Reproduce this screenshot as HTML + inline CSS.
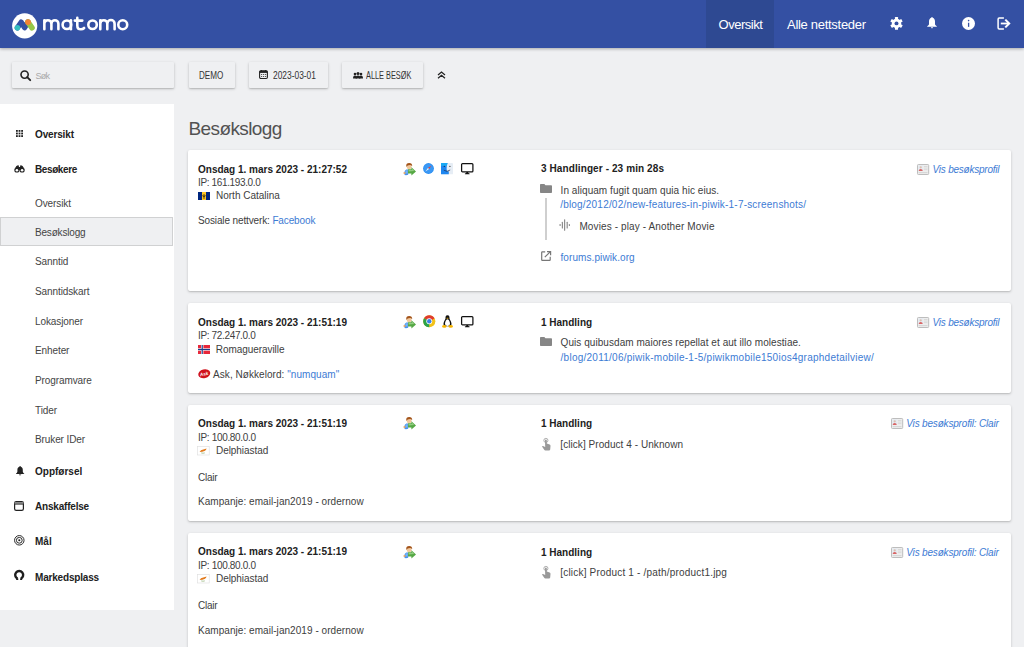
<!DOCTYPE html>
<html><head><meta charset="utf-8">
<style>
*{box-sizing:border-box}
html,body{margin:0;padding:0}
body{width:1024px;height:647px;overflow:hidden;position:relative;background:#eff0f2;font-family:"Liberation Sans",sans-serif;color:#333}
.a{position:absolute;white-space:nowrap}
svg.a{overflow:visible}
#hdr{position:absolute;left:0;top:0;width:1024px;height:48px;background:#3450a3;box-shadow:0 1px 3px rgba(0,0,0,.3);z-index:2}
#hdr .act{position:absolute;left:706.4px;top:0;width:68px;height:48px;background:#2e4992}
#hdr .t{position:absolute;color:#fff;font-size:13px;top:16.7px;line-height:16px;white-space:nowrap}
.btn{position:absolute;top:62px;height:26px;background:#eff0f2;border-radius:1px;box-shadow:0 1px 3px rgba(0,0,0,.22),0 1px 1px rgba(0,0,0,.08)}
.btn span{position:absolute;font-size:10px;color:#333;top:7.6px;line-height:12px;white-space:nowrap;transform-origin:0 0}
#side{position:absolute;left:0;top:104px;width:174px;height:505.8px;background:#fff}
.sb{position:absolute;left:35px;font-size:10px;font-weight:bold;color:#212121;line-height:12px;white-space:nowrap}
.si{position:absolute;left:35px;font-size:10px;color:#444;line-height:12px;white-space:nowrap;letter-spacing:-0.1px}
.card{position:absolute;left:188px;width:823px;background:#fff;border-radius:2px;box-shadow:0 1px 3px rgba(0,0,0,.18),0 1px 1px rgba(0,0,0,.08)}
.c{position:absolute;white-space:nowrap;font-size:10px;line-height:12px;color:#404040}
.b{font-weight:bold;color:#212121}
.lk{color:#3d7bd4}
.it{font-style:italic;color:#3d7bd4}
</style></head><body>
<div id="hdr">
  <svg class="a" style="left:12px;top:12.5px" width="26" height="26" viewBox="0 0 26 26">
    <circle cx="12.7" cy="12.8" r="12.6" fill="#fff"/>
    <path d="M5.4 14.8 L9.2 9.2 L12.6 14.7 L16 9.1" fill="none" stroke="#3450a3" stroke-width="5.4" stroke-linecap="round" stroke-linejoin="round"/>
    <path d="M16 9.1 L20 14.8" fill="none" stroke="#95c748" stroke-width="5.6" stroke-linecap="round"/>
    <circle cx="5.4" cy="14.8" r="2.8" fill="#35bfc0"/>
    <circle cx="16" cy="9.1" r="2.9" fill="#f38334"/>
  </svg>
  <svg class="a" style="left:0;top:0" width="140" height="48" viewBox="0 0 140 48">
    <g fill="none" stroke="#fff" stroke-width="2.6" stroke-linecap="round">
      <path d="M44.35 29.3 V20.2 M44.35 23.7 A3.525 3.525 0 0 1 51.4 23.7 V29.3 M51.4 23.7 A3.5 3.5 0 0 1 58.4 23.7 V29.3"/>
      <circle cx="66.9" cy="24.75" r="4.3"/>
      <path d="M70.9 20.2 V29.3"/>
      <path d="M77.3 17.9 V25.4 Q77.3 29.3 80.9 29.3 Q82.9 29.3 84.1 28 M74.8 20.6 H82.3"/>
      <circle cx="92.55" cy="24.75" r="4.25"/>
      <path d="M100.3 29.3 V20.2 M100.3 23.7 A3.5 3.5 0 0 1 107.3 23.7 V29.3 M107.3 23.7 A3.65 3.65 0 0 1 114.6 23.7 V29.3"/>
      <circle cx="122.75" cy="24.75" r="4.45"/>
    </g>
  </svg>
  <div class="act"></div>
  <div class="t" style="left:718.5px;letter-spacing:-0.48px">Oversikt</div>
  <div class="t" style="left:787px;letter-spacing:-0.29px">Alle nettsteder</div>
  <!-- gear -->
  <svg class="a" style="left:889.8px;top:17px" width="13" height="13" viewBox="0 0 13 13">
    <g fill="#fff" transform="translate(6.5 6.4)">
      <rect x="-1.55" y="-6.3" width="3.1" height="12.6" rx="0.5"/>
      <rect x="-1.55" y="-6.3" width="3.1" height="12.6" rx="0.5" transform="rotate(60)"/>
      <rect x="-1.55" y="-6.3" width="3.1" height="12.6" rx="0.5" transform="rotate(120)"/>
      <circle r="4.7"/>
    </g>
    <circle cx="6.5" cy="6.4" r="1.95" fill="#3450a3"/>
  </svg>
  <!-- bell -->
  <svg class="a" style="left:927.3px;top:17.4px" width="10" height="11.6" viewBox="0 0 10 11.6">
    <path d="M5 0 C5.5 0 5.7 0.4 5.7 0.8 C7.3 1.3 8 2.8 8 4.6 L8 6.9 C8 7.9 9 8.6 9.8 9.3 L9.8 9.8 L0.2 9.8 L0.2 9.3 C1 8.6 2 7.9 2 6.9 L2 4.6 C2 2.8 2.7 1.3 4.3 0.8 C4.3 0.4 4.5 0 5 0 Z M4 10.3 L6 10.3 C6 10.9 5.6 11.3 5 11.3 C4.4 11.3 4 10.9 4 10.3 Z" fill="#fff"/>
  </svg>
  <!-- info -->
  <svg class="a" style="left:961.6px;top:17px" width="13" height="13" viewBox="0 0 13 13">
    <circle cx="6.5" cy="6.5" r="6.5" fill="#fff"/>
    <circle cx="6.6" cy="3.6" r="0.8" fill="#3450a3"/>
    <rect x="5.95" y="5.75" width="1.3" height="4.1" fill="#3450a3"/>
  </svg>
  <!-- sign out -->
  <svg class="a" style="left:997.4px;top:16.7px" width="14" height="13" viewBox="0 0 14 13">
    <path d="M6.9 1.1 L2.2 1.1 Q1.1 1.1 1.1 2.2 L1.1 10.8 Q1.1 11.9 2.2 11.9 L6.9 11.9" fill="none" stroke="#fff" stroke-width="1.5"/>
    <path d="M3.8 6.5 L11.8 6.5" stroke="#fff" stroke-width="1.8"/>
    <path d="M8.3 2.6 L12.2 6.5 L8.3 10.4" fill="none" stroke="#fff" stroke-width="2"/>
  </svg>
</div>

<!-- top controls -->
<div class="btn" style="left:12px;width:162px">
  <svg class="a" style="left:7.5px;top:8px" width="11" height="11" viewBox="0 0 11 11">
    <circle cx="4.6" cy="4.6" r="3.6" fill="none" stroke="#222" stroke-width="1.6"/>
    <path d="M7.2 7.2 L10.2 10.2" stroke="#222" stroke-width="1.9" stroke-linecap="round"/>
  </svg>
  <span style="left:23.5px;color:#a8a8a8;font-size:9px;top:8.3px;letter-spacing:-0.7px">Søk</span>
</div>
<div class="btn" style="left:188.5px;width:46.7px"><span style="left:10.8px;transform:scaleX(0.81)">DEMO</span></div>
<div class="btn" style="left:249px;width:79px">
  <svg class="a" style="left:10px;top:8px" width="9" height="9" viewBox="0 0 9 9">
    <rect x="0.6" y="0.9" width="7.8" height="7.6" rx="1.2" fill="none" stroke="#222" stroke-width="1.1"/>
    <rect x="0.6" y="0.9" width="7.8" height="2" fill="#222"/>
    <rect x="1.8" y="0" width="1" height="1.5" fill="#222"/><rect x="6.2" y="0" width="1" height="1.5" fill="#222"/>
    <g fill="#555"><rect x="2" y="4" width="1.2" height="1"/><rect x="4" y="4" width="1.2" height="1"/><rect x="6" y="4" width="1.2" height="1"/><rect x="2" y="6" width="1.2" height="1"/><rect x="4" y="6" width="1.2" height="1"/><rect x="6" y="6" width="1.2" height="1"/></g>
  </svg>
  <span style="left:23.8px;transform:scaleX(0.84)">2023-03-01</span>
</div>
<div class="btn" style="left:342px;width:81px">
  <svg class="a" style="left:10.5px;top:9.5px" width="10" height="7" viewBox="0 0 10 7">
    <g fill="#222"><circle cx="2" cy="2" r="1.3"/><circle cx="5" cy="1.6" r="1.5"/><circle cx="8" cy="2" r="1.3"/>
    <path d="M0 6.5 Q0 3.6 2 3.6 Q4 3.6 4 6.5Z"/><path d="M2.6 6.5 Q2.6 3.4 5 3.4 Q7.4 3.4 7.4 6.5Z"/><path d="M6 6.5 Q6 3.6 8 3.6 Q10 3.6 10 6.5Z"/></g>
  </svg>
  <span style="left:23.9px;transform:scaleX(0.735)">ALLE BESØK</span>
</div>
<svg class="a" style="left:437px;top:71px" width="9" height="8" viewBox="0 0 9 8">
  <path d="M1 4 L4.5 1 L8 4 M1 7.2 L4.5 4.2 L8 7.2" fill="none" stroke="#222" stroke-width="1.25"/>
</svg>

<!-- sidebar -->
<div id="side"></div>
<svg class="a" style="left:16px;top:130px" width="7" height="7" viewBox="0 0 7 7">
  <g fill="#222"><rect x="0" y="0" width="1.8" height="1.8"/><rect x="2.6" y="0" width="1.8" height="1.8"/><rect x="5.2" y="0" width="1.8" height="1.8"/>
  <rect x="0" y="2.6" width="1.8" height="1.8"/><rect x="2.6" y="2.6" width="1.8" height="1.8"/><rect x="5.2" y="2.6" width="1.8" height="1.8"/>
  <rect x="0" y="5.2" width="1.8" height="1.8"/><rect x="2.6" y="5.2" width="1.8" height="1.8"/><rect x="5.2" y="5.2" width="1.8" height="1.8"/></g>
</svg>
<div class="sb" style="top:129.2px;letter-spacing:-0.15px">Oversikt</div>
<svg class="a" style="left:14.2px;top:165px" width="11" height="8" viewBox="0 0 11 8">
  <path d="M1.2 3 Q2.2 0.2 4 0.2 L4.6 0.2 L5 2 L6 2 L6.4 0.2 L7 0.2 Q8.8 0.2 9.8 3 Z" fill="#222"/>
  <circle cx="2.9" cy="5" r="2.6" fill="#222"/><circle cx="8.1" cy="5" r="2.6" fill="#222"/>
  <rect x="4" y="2.5" width="3" height="2.5" fill="#222"/>
  <circle cx="2.9" cy="5.2" r="1.3" fill="#fff"/><circle cx="8.1" cy="5.2" r="1.3" fill="#fff"/>
</svg>
<div class="sb" style="top:164px;letter-spacing:-0.4px">Besøkere</div>
<div class="si" style="top:197.9px">Oversikt</div>
<div class="a" style="left:0;top:217.4px;width:173.3px;height:28.6px;border:1.5px solid #d0d1d2;background:#eff0f2"></div>
<div class="si" style="top:227px;letter-spacing:-0.18px">Besøkslogg</div>
<div class="si" style="top:256.4px">Sanntid</div>
<div class="si" style="top:286.4px">Sanntidskart</div>
<div class="si" style="top:316px">Lokasjoner</div>
<div class="si" style="top:345.4px">Enheter</div>
<div class="si" style="top:375px">Programvare</div>
<div class="si" style="top:404.7px">Tider</div>
<div class="si" style="top:434px">Bruker IDer</div>
<svg class="a" style="left:15.7px;top:465.8px" width="8.2" height="9.3" viewBox="0 0 8.2 9.3">
  <path d="M4.1 0 C4.6 0 4.8 0.3 4.8 0.8 C6.3 1.2 6.8 2.5 6.8 4 L6.8 5.5 C6.8 6.4 7.6 7 8.2 7.6 L8.2 8 L0 8 L0 7.6 C0.6 7 1.4 6.4 1.4 5.5 L1.4 4 C1.4 2.5 1.9 1.2 3.4 0.8 C3.4 0.3 3.6 0 4.1 0 Z M3 8.4 L5.2 8.4 C5.2 9 4.7 9.3 4.1 9.3 C3.5 9.3 3 9 3 8.4 Z" fill="#222"/>
</svg>
<div class="sb" style="top:466.4px">Oppførsel</div>
<svg class="a" style="left:14.4px;top:500.6px" width="10" height="10" viewBox="0 0 10 10">
  <rect x="0.6" y="0.6" width="8.8" height="8.8" rx="1.6" fill="none" stroke="#222" stroke-width="1.2"/>
  <rect x="0.6" y="1" width="8.8" height="2" fill="#888"/><rect x="0.6" y="2.8" width="8.8" height="0.8" fill="#333"/>
</svg>
<div class="sb" style="top:501.3px;letter-spacing:-0.2px">Anskaffelse</div>
<svg class="a" style="left:14.1px;top:534.9px" width="10.6" height="10.6" viewBox="0 0 10.6 10.6">
  <g fill="none" stroke="#222" stroke-width="0.95"><circle cx="5.3" cy="5.3" r="4.75"/><circle cx="5.3" cy="5.3" r="2.9"/></g>
  <circle cx="5.3" cy="5.3" r="1.05" fill="#222"/>
</svg>
<div class="sb" style="top:536.4px">Mål</div>
<svg class="a" style="left:14.2px;top:570.3px" width="10.4" height="10.2" viewBox="0 0 10.4 10.2">
  <path d="M3.53 8.58 A3.95 3.95 0 1 1 6.87 8.58" fill="none" stroke="#1e1e1e" stroke-width="2.4"/><path d="M2.1 10 L4.3 10 L4.2 8.2 L2.5 8.2Z M6.1 10 L8.3 10 L7.9 8.2 L6.2 8.2Z" fill="#1e1e1e"/>
</svg>
<div class="sb" style="top:571.6px;letter-spacing:-0.18px">Markedsplass</div>

<div class="a" style="left:188.5px;top:117.5px;font-size:19px;color:#525252;line-height:22px;letter-spacing:-0.6px">Besøkslogg</div>

<!-- ============ card 1 ============ -->
<div class="card" style="top:150px;height:141px"></div>
<div class="c b" style="left:198px;top:163.5px">Onsdag 1. mars 2023 - 21:27:52</div>
<div class="c" style="left:198px;top:176.7px;letter-spacing:-0.36px">IP: 161.193.0.0</div>
<svg class="a" style="left:198px;top:192px" width="12" height="8" viewBox="0 0 12 8">
  <rect width="12" height="8" fill="#00267f"/><rect x="4" width="4" height="8" fill="#ffc726"/>
  <path d="M6 2 L6 7 M4.8 3 Q5 5 6 5 Q7 5 7.2 3" fill="none" stroke="#000" stroke-width="0.6"/>
</svg>
<div class="c" style="left:216px;top:190.2px">North Catalina</div>
<div class="c" style="left:198px;top:214.8px;letter-spacing:-0.13px">Sosiale nettverk: <span class="lk">Facebook</span></div>

<div class="c b" style="left:541px;top:163.4px;letter-spacing:0.1px">3 Handlinger - 23 min 28s</div>
<div class="c" style="left:560.6px;top:184.6px;letter-spacing:0.05px">In aliquam fugit quam quia hic eius.</div>
<div class="c lk" style="left:560.2px;top:198.7px;letter-spacing:0.2px">/blog/2012/02/new-features-in-piwik-1-7-screenshots/</div>
<div class="c" style="left:579.4px;top:220.9px;letter-spacing:0.12px">Movies - play - Another Movie</div>
<div class="c lk" style="left:560.5px;top:251.9px;letter-spacing:0.09px">forums.piwik.org</div>
<div class="c it" style="left:932.6px;top:163.5px;letter-spacing:-0.23px">Vis besøksprofil</div>
<svg class="a" style="left:402.9px;top:162.5px" width="13" height="12.5" viewBox="0 0 13 12.5">
  <path d="M1.6 12 Q0.8 7.2 3.4 6.4 L5.2 6.4 L5.2 11.8 Q3.5 12.4 1.6 12Z" fill="#4a90ea"/>
  <path d="M2.4 7.2 L4.6 7.2 L4.6 10.5 L2.6 10.5Z" fill="#7fc0fa" opacity=".8"/>
  <ellipse cx="6.2" cy="4" rx="2.5" ry="2.3" fill="#f1c79a"/>
  <path d="M3.2 3.4 Q3 0.1 6.2 0.1 Q9.2 0.1 9.2 3 L8.6 2.8 Q7.6 1.6 6 2.2 Q4.4 1.8 3.6 3.8Z" fill="#a3541a"/>
  <circle cx="1.5" cy="10" r="1.1" fill="#e9a765"/>
  <path d="M5 6.3 L8.4 6.3 L8.4 4.2 L13 8.4 L8.4 12.5 L8.4 10.5 L5 10.5 Z" fill="#55a844"/>
  <path d="M5.6 6.9 L9 6.9 L9 5.6 L11.2 7.9 L5.6 8.4Z" fill="#a5d894" opacity=".75"/>
</svg><svg class="a" style="left:423.3px;top:162.8px" width="11" height="11" viewBox="0 0 11 11">
  <circle cx="5.5" cy="5.5" r="5.4" fill="#2d8ff2"/>
  <circle cx="5.5" cy="5.5" r="4.6" fill="#3a98f5"/>
  <path d="M8.6 2.4 L6.1 6.1 L4.9 4.9 Z" fill="#e8423b"/>
  <path d="M2.4 8.6 L4.9 4.9 L6.1 6.1 Z" fill="#f4f4f4"/>
</svg><svg class="a" style="left:441.4px;top:162.6px" width="12" height="11.3" viewBox="0 0 12 11.3">
  <rect x="0" y="0" width="12" height="11.3" rx="0.5" fill="#e6edf5"/>
  <path d="M0.5 0 L6.6 0 Q5.4 3 5.6 6 L6 8.2 L7.8 8.2 L7.8 11.3 L0.5 11.3 Q0 11.3 0 10.8 L0 0.5 Q0 0 0.5 0Z" fill="#1e86f0"/>
  <path d="M0 0 L6.6 0 Q6 1.5 5.8 3 L0 3Z" fill="#19b0f5" opacity=".8"/>
  <circle cx="3.3" cy="3.4" r="0.6" fill="#1a2a50"/><circle cx="8.9" cy="3.4" r="0.6" fill="#333"/>
  <path d="M2.8 7.2 Q6 9.6 9.2 7" fill="none" stroke="#1a2a50" stroke-width="0.7"/>
</svg><svg class="a" style="left:460.5px;top:162.6px" width="12.5" height="11.3" viewBox="0 0 12.5 11.3">
  <rect x="0.6" y="0.6" width="11.3" height="8.3" rx="0.9" fill="none" stroke="#111" stroke-width="1.25"/>
  <path d="M5.4 9 L7.1 9 L7.3 10.1 L8.6 10.5 L8.6 11.2 L3.9 11.2 L3.9 10.5 L5.2 10.1Z" fill="#111"/>
</svg><svg class="a" style="left:539.9px;top:184px" width="12" height="9" viewBox="0 0 12 9">
  <path d="M0.8 0 L4.4 0 L5.4 1.3 L11.2 1.3 Q12 1.3 12 2.1 L12 8.2 Q12 9 11.2 9 L0.8 9 Q0 9 0 8.2 L0 0.8 Q0 0 0.8 0Z" fill="#868686"/>
</svg><svg class="a" style="left:559px;top:218.6px" width="11.5" height="12" viewBox="0 0 11.5 12">
  <g fill="#8e8e8e"><rect x="0.5" y="5.1" width="1.2" height="2" rx="0.5"/><rect x="2.8" y="2.7" width="1.2" height="6.8" rx="0.5"/><rect x="5" y="0.3" width="1.2" height="11.5" rx="0.5"/><rect x="7.6" y="2.8" width="1.2" height="6.6" rx="0.5"/><rect x="9.8" y="5.1" width="1.2" height="2" rx="0.5"/></g>
</svg><svg class="a" style="left:540.9px;top:250.8px" width="10.5" height="10" viewBox="0 0 10.5 10">
  <path d="M4.2 0.8 L1.3 0.8 Q0.7 0.8 0.7 1.4 L0.7 8.7 Q0.7 9.3 1.3 9.3 L8.6 9.3 Q9.2 9.3 9.2 8.7 L9.2 5.8" fill="none" stroke="#777" stroke-width="1.2"/>
  <path d="M3.8 6.2 L9.4 0.6 M6 0.6 L9.6 0.6 L9.6 4.2" fill="none" stroke="#777" stroke-width="1.2"/>
</svg><svg class="a" style="left:917.1px;top:163.5px" width="12.2" height="11" viewBox="0 0 12.2 11">
  <rect x="0.5" y="0.5" width="11.2" height="10" rx="0.8" fill="#eeeeee" stroke="#bdbdbd" stroke-width="1"/>
  <rect x="1.4" y="1.4" width="4.6" height="5.6" fill="#e4ebf3"/>
  <circle cx="3.7" cy="3.3" r="1.15" fill="#dcbfae"/>
  <path d="M1.6 7 Q1.8 5 3.7 4.9 Q5.6 5 5.8 7Z" fill="#d96565"/>
  <g fill="#d2d2d2"><rect x="6.9" y="2" width="3.6" height="0.7"/><rect x="6.9" y="3.7" width="3.6" height="0.7"/><rect x="6.9" y="5.4" width="3.6" height="0.7"/><rect x="1.6" y="8.2" width="8.9" height="0.9"/></g>
</svg>
<div class="a" style="left:545.4px;top:198.2px;width:1.2px;height:42.2px;background:#cfcfcf"></div>

<!-- ============ card 2 ============ -->
<div class="card" style="top:303.4px;height:89.3px"></div>
<div class="c b" style="left:198px;top:316.6px">Onsdag 1. mars 2023 - 21:51:19</div>
<div class="c" style="left:198px;top:330.4px;letter-spacing:-0.35px">IP: 72.247.0.0</div>
<svg class="a" style="left:198px;top:345px" width="12" height="9" viewBox="0 0 12 9">
  <rect width="12" height="9" fill="#e8283a"/><rect x="3" width="2.4" height="9" fill="#fff"/><rect y="3.3" width="12" height="2.4" fill="#fff"/>
  <rect x="3.6" width="1.2" height="9" fill="#1b3e8a"/><rect y="3.9" width="12" height="1.2" fill="#1b3e8a"/>
</svg>
<div class="c" style="left:215.8px;top:343.5px;letter-spacing:-0.06px">Romagueraville</div>
<svg class="a" style="left:197.5px;top:369.3px" width="12.5" height="9.5" viewBox="0 0 12.5 9.5">
  <ellipse cx="6.25" cy="4.75" rx="6.1" ry="4.3" fill="#d0121b" transform="rotate(-14 6.25 4.75)"/>
  <text x="6.1" y="6.5" text-anchor="middle" font-family="Liberation Sans" font-size="4.6" font-weight="bold" font-style="italic" fill="#fff" transform="rotate(-12 6.25 4.75)">Ask</text>
</svg>
<div class="c" style="left:213.1px;top:368.5px;letter-spacing:0.05px">Ask, Nøkkelord: <span class="lk">"numquam"</span></div>

<div class="c b" style="left:541px;top:317px">1 Handling</div>
<div class="c" style="left:560.6px;top:337.1px;letter-spacing:0.056px">Quis quibusdam maiores repellat et aut illo molestiae.</div>
<div class="c lk" style="left:560.6px;top:352px;letter-spacing:0.25px">/blog/2011/06/piwik-mobile-1-5/piwikmobile150ios4graphdetailview/</div>
<svg class="a" style="left:402.9px;top:315.6px" width="13" height="12.5" viewBox="0 0 13 12.5">
  <path d="M1.6 12 Q0.8 7.2 3.4 6.4 L5.2 6.4 L5.2 11.8 Q3.5 12.4 1.6 12Z" fill="#4a90ea"/>
  <path d="M2.4 7.2 L4.6 7.2 L4.6 10.5 L2.6 10.5Z" fill="#7fc0fa" opacity=".8"/>
  <ellipse cx="6.2" cy="4" rx="2.5" ry="2.3" fill="#f1c79a"/>
  <path d="M3.2 3.4 Q3 0.1 6.2 0.1 Q9.2 0.1 9.2 3 L8.6 2.8 Q7.6 1.6 6 2.2 Q4.4 1.8 3.6 3.8Z" fill="#a3541a"/>
  <circle cx="1.5" cy="10" r="1.1" fill="#e9a765"/>
  <path d="M5 6.3 L8.4 6.3 L8.4 4.2 L13 8.4 L8.4 12.5 L8.4 10.5 L5 10.5 Z" fill="#55a844"/>
  <path d="M5.6 6.9 L9 6.9 L9 5.6 L11.2 7.9 L5.6 8.4Z" fill="#a5d894" opacity=".75"/>
</svg><svg class="a" style="left:422.7px;top:315.2px" width="12.5" height="12.5" viewBox="0 0 12.5 12.5">
  <circle cx="6.25" cy="6.25" r="6.1" fill="#f2c21a"/>
  <path d="M6.25 6.25 L1.0 3.2 A6.1 6.1 0 0 1 11.5 3.2 Z" fill="#df3a2f"/>
  <path d="M6.25 6.25 L1.0 3.2 A6.1 6.1 0 0 0 6.25 12.35 Z" fill="#2aa24a"/>
  <path d="M6.25 6.25 L11.5 3.2 L6.25 3.2 Z" fill="#df3a2f"/>
  <circle cx="6.25" cy="6.25" r="2.9" fill="#fff"/>
  <circle cx="6.25" cy="6.25" r="2.2" fill="#3b7fe6"/>
</svg><svg class="a" style="left:442px;top:315px" width="11" height="13" viewBox="0 0 11 13">
  <path d="M5.5 0.2 C3.6 0.2 3.4 2 3.5 3.6 C3.5 4.6 2 5.8 1.6 8 C1.3 9.6 1.8 10.8 2.6 11.2 L8.4 11.2 C9.2 10.8 9.7 9.6 9.4 8 C9 5.8 7.5 4.6 7.5 3.6 C7.6 2 7.4 0.2 5.5 0.2Z" fill="#111"/>
  <path d="M5.5 4.2 C4.1 4.4 3 6.6 3 8.6 C3 10.3 4 11 5.5 11 C7 11 8 10.3 8 8.6 C8 6.6 6.9 4.4 5.5 4.2Z" fill="#fff"/>
  <path d="M4.2 3 Q5.5 2.3 6.8 3 Q5.5 4.3 4.2 3Z" fill="#f5b400"/>
  <ellipse cx="2.3" cy="11.4" rx="2.2" ry="1.3" fill="#f5b400"/>
  <ellipse cx="8.7" cy="11.4" rx="2.2" ry="1.3" fill="#f5b400"/>
</svg><svg class="a" style="left:460.5px;top:315.9px" width="12.5" height="11.3" viewBox="0 0 12.5 11.3">
  <rect x="0.6" y="0.6" width="11.3" height="8.3" rx="0.9" fill="none" stroke="#111" stroke-width="1.25"/>
  <path d="M5.4 9 L7.1 9 L7.3 10.1 L8.6 10.5 L8.6 11.2 L3.9 11.2 L3.9 10.5 L5.2 10.1Z" fill="#111"/>
</svg><svg class="a" style="left:540px;top:337.2px" width="12" height="9" viewBox="0 0 12 9">
  <path d="M0.8 0 L4.4 0 L5.4 1.3 L11.2 1.3 Q12 1.3 12 2.1 L12 8.2 Q12 9 11.2 9 L0.8 9 Q0 9 0 8.2 L0 0.8 Q0 0 0.8 0Z" fill="#868686"/>
</svg><svg class="a" style="left:917.1px;top:316.9px" width="12.2" height="11" viewBox="0 0 12.2 11">
  <rect x="0.5" y="0.5" width="11.2" height="10" rx="0.8" fill="#eeeeee" stroke="#bdbdbd" stroke-width="1"/>
  <rect x="1.4" y="1.4" width="4.6" height="5.6" fill="#e4ebf3"/>
  <circle cx="3.7" cy="3.3" r="1.15" fill="#dcbfae"/>
  <path d="M1.6 7 Q1.8 5 3.7 4.9 Q5.6 5 5.8 7Z" fill="#d96565"/>
  <g fill="#d2d2d2"><rect x="6.9" y="2" width="3.6" height="0.7"/><rect x="6.9" y="3.7" width="3.6" height="0.7"/><rect x="6.9" y="5.4" width="3.6" height="0.7"/><rect x="1.6" y="8.2" width="8.9" height="0.9"/></g>
</svg>
<div class="c it" style="left:932.6px;top:317px;letter-spacing:-0.23px">Vis besøksprofil</div>

<!-- ============ card 3 ============ -->
<div class="card" style="top:405px;height:115.5px"></div>
<div class="c b" style="left:198px;top:418px">Onsdag 1. mars 2023 - 21:51:19</div>
<div class="c" style="left:198px;top:431.8px;letter-spacing:-0.33px">IP: 100.80.0.0</div>
<svg class="a" style="left:197.3px;top:445.8px" width="12.5" height="9.3" viewBox="0 0 12.5 9.3">
  <rect x="0.3" y="0.3" width="11.9" height="8.7" fill="#fff" stroke="#ddd" stroke-width="0.6"/>
  <path d="M2.6 6 Q3.6 3.6 6.2 3.4 Q8 3 9.6 2.4 Q9.2 4.2 7.6 5 Q5.6 6 2.6 6Z" fill="#e27a1c"/>
  <path d="M4.2 6.9 Q6 7.6 7.8 6.9" fill="none" stroke="#7aa35a" stroke-width="0.6"/>
</svg>
<div class="c" style="left:216px;top:445.1px;letter-spacing:-0.06px">Delphiastad</div>
<div class="c" style="left:198px;top:472.1px;letter-spacing:-0.27px">Clair</div>
<div class="c" style="left:198px;top:496.4px;letter-spacing:0.05px">Kampanje: email-jan2019 - ordernow</div>

<div class="c b" style="left:541px;top:417.9px">1 Handling</div>
<div class="c" style="left:560.3px;top:438.5px;letter-spacing:0.06px">[click] Product 4 - Unknown</div>
<svg class="a" style="left:402.9px;top:417.0px" width="13" height="12.5" viewBox="0 0 13 12.5">
  <path d="M1.6 12 Q0.8 7.2 3.4 6.4 L5.2 6.4 L5.2 11.8 Q3.5 12.4 1.6 12Z" fill="#4a90ea"/>
  <path d="M2.4 7.2 L4.6 7.2 L4.6 10.5 L2.6 10.5Z" fill="#7fc0fa" opacity=".8"/>
  <ellipse cx="6.2" cy="4" rx="2.5" ry="2.3" fill="#f1c79a"/>
  <path d="M3.2 3.4 Q3 0.1 6.2 0.1 Q9.2 0.1 9.2 3 L8.6 2.8 Q7.6 1.6 6 2.2 Q4.4 1.8 3.6 3.8Z" fill="#a3541a"/>
  <circle cx="1.5" cy="10" r="1.1" fill="#e9a765"/>
  <path d="M5 6.3 L8.4 6.3 L8.4 4.2 L13 8.4 L8.4 12.5 L8.4 10.5 L5 10.5 Z" fill="#55a844"/>
  <path d="M5.6 6.9 L9 6.9 L9 5.6 L11.2 7.9 L5.6 8.4Z" fill="#a5d894" opacity=".75"/>
</svg><svg class="a" style="left:541.8px;top:438.2px" width="9" height="12.5" viewBox="0 0 9 12.5">
  <circle cx="3.9" cy="2.4" r="2.05" fill="none" stroke="#aaa" stroke-width="0.95"/>
  <path d="M3 2.6 Q3 1.6 3.9 1.6 Q4.8 1.6 4.8 2.6 L4.8 5.6 L7.6 6.4 Q8.6 6.8 8.5 8 L8.2 11.4 Q8 12.5 7 12.5 L3.4 12.5 Q2.6 12.5 2.2 11.8 L0 8.6 Q0.2 7.8 1 8 L3.2 9 Z" fill="#999"/>
</svg><svg class="a" style="left:891px;top:418.2px" width="12.2" height="11" viewBox="0 0 12.2 11">
  <rect x="0.5" y="0.5" width="11.2" height="10" rx="0.8" fill="#eeeeee" stroke="#bdbdbd" stroke-width="1"/>
  <rect x="1.4" y="1.4" width="4.6" height="5.6" fill="#e4ebf3"/>
  <circle cx="3.7" cy="3.3" r="1.15" fill="#dcbfae"/>
  <path d="M1.6 7 Q1.8 5 3.7 4.9 Q5.6 5 5.8 7Z" fill="#d96565"/>
  <g fill="#d2d2d2"><rect x="6.9" y="2" width="3.6" height="0.7"/><rect x="6.9" y="3.7" width="3.6" height="0.7"/><rect x="6.9" y="5.4" width="3.6" height="0.7"/><rect x="1.6" y="8.2" width="8.9" height="0.9"/></g>
</svg>
<div class="c it" style="left:906.3px;top:418px;letter-spacing:-0.18px">Vis besøksprofil: Clair</div>

<!-- ============ card 4 ============ -->
<div class="card" style="top:532.8px;height:200px"></div>
<div class="c b" style="left:198px;top:546.2px">Onsdag 1. mars 2023 - 21:51:19</div>
<div class="c" style="left:198px;top:559.5px;letter-spacing:-0.33px">IP: 100.80.0.0</div>
<svg class="a" style="left:197.3px;top:573.6px" width="12.5" height="9.3" viewBox="0 0 12.5 9.3">
  <rect x="0.3" y="0.3" width="11.9" height="8.7" fill="#fff" stroke="#ddd" stroke-width="0.6"/>
  <path d="M2.6 6 Q3.6 3.6 6.2 3.4 Q8 3 9.6 2.4 Q9.2 4.2 7.6 5 Q5.6 6 2.6 6Z" fill="#e27a1c"/>
  <path d="M4.2 6.9 Q6 7.6 7.8 6.9" fill="none" stroke="#7aa35a" stroke-width="0.6"/>
</svg>
<div class="c" style="left:216px;top:572.7px;letter-spacing:-0.06px">Delphiastad</div>
<div class="c" style="left:198px;top:600.2px;letter-spacing:-0.27px">Clair</div>
<div class="c" style="left:198px;top:624.5px;letter-spacing:0.05px">Kampanje: email-jan2019 - ordernow</div>

<div class="c b" style="left:541px;top:546.5px">1 Handling</div>
<div class="c" style="left:560.3px;top:567.2px;letter-spacing:0.19px">[click] Product 1 - /path/product1.jpg</div>
<svg class="a" style="left:402.9px;top:545.8px" width="13" height="12.5" viewBox="0 0 13 12.5">
  <path d="M1.6 12 Q0.8 7.2 3.4 6.4 L5.2 6.4 L5.2 11.8 Q3.5 12.4 1.6 12Z" fill="#4a90ea"/>
  <path d="M2.4 7.2 L4.6 7.2 L4.6 10.5 L2.6 10.5Z" fill="#7fc0fa" opacity=".8"/>
  <ellipse cx="6.2" cy="4" rx="2.5" ry="2.3" fill="#f1c79a"/>
  <path d="M3.2 3.4 Q3 0.1 6.2 0.1 Q9.2 0.1 9.2 3 L8.6 2.8 Q7.6 1.6 6 2.2 Q4.4 1.8 3.6 3.8Z" fill="#a3541a"/>
  <circle cx="1.5" cy="10" r="1.1" fill="#e9a765"/>
  <path d="M5 6.3 L8.4 6.3 L8.4 4.2 L13 8.4 L8.4 12.5 L8.4 10.5 L5 10.5 Z" fill="#55a844"/>
  <path d="M5.6 6.9 L9 6.9 L9 5.6 L11.2 7.9 L5.6 8.4Z" fill="#a5d894" opacity=".75"/>
</svg><svg class="a" style="left:541.8px;top:566.2px" width="9" height="12.5" viewBox="0 0 9 12.5">
  <circle cx="3.9" cy="2.4" r="2.05" fill="none" stroke="#aaa" stroke-width="0.95"/>
  <path d="M3 2.6 Q3 1.6 3.9 1.6 Q4.8 1.6 4.8 2.6 L4.8 5.6 L7.6 6.4 Q8.6 6.8 8.5 8 L8.2 11.4 Q8 12.5 7 12.5 L3.4 12.5 Q2.6 12.5 2.2 11.8 L0 8.6 Q0.2 7.8 1 8 L3.2 9 Z" fill="#999"/>
</svg><svg class="a" style="left:891px;top:546.6px" width="12.2" height="11" viewBox="0 0 12.2 11">
  <rect x="0.5" y="0.5" width="11.2" height="10" rx="0.8" fill="#eeeeee" stroke="#bdbdbd" stroke-width="1"/>
  <rect x="1.4" y="1.4" width="4.6" height="5.6" fill="#e4ebf3"/>
  <circle cx="3.7" cy="3.3" r="1.15" fill="#dcbfae"/>
  <path d="M1.6 7 Q1.8 5 3.7 4.9 Q5.6 5 5.8 7Z" fill="#d96565"/>
  <g fill="#d2d2d2"><rect x="6.9" y="2" width="3.6" height="0.7"/><rect x="6.9" y="3.7" width="3.6" height="0.7"/><rect x="6.9" y="5.4" width="3.6" height="0.7"/><rect x="1.6" y="8.2" width="8.9" height="0.9"/></g>
</svg>
<div class="c it" style="left:906.3px;top:546.5px;letter-spacing:-0.18px">Vis besøksprofil: Clair</div>

</body></html>
